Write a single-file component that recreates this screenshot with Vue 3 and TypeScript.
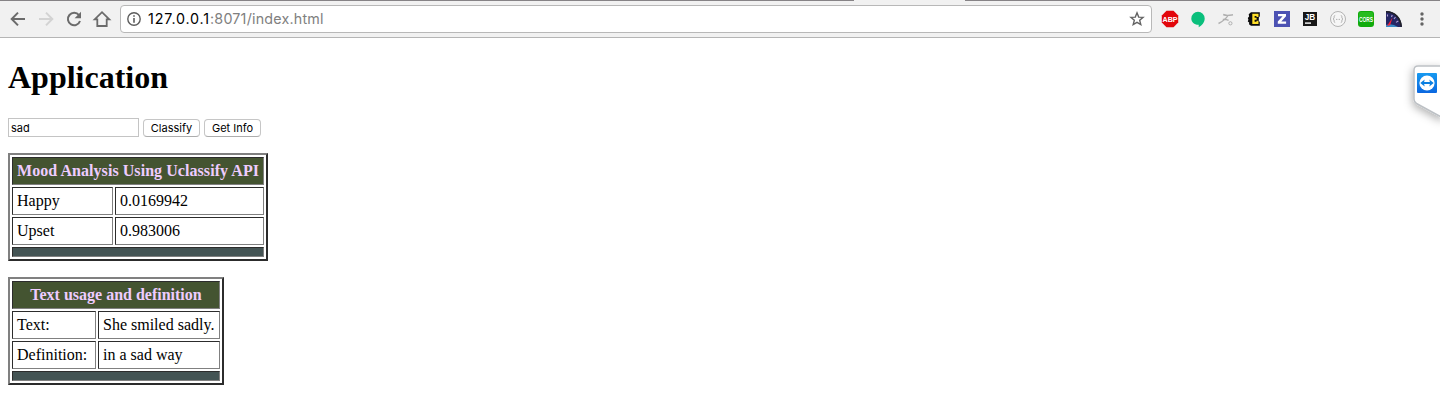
<script setup lang="ts">
interface ResultTable {
  title: string
  kind: string
  rows: [string, string][]
}

const query = 'sad'
const tables: ResultTable[] = [
  { title: 'Mood Analysis Using Uclassify API', kind: 'mood', rows: [['Happy', '0.0169942'], ['Upset', '0.983006']] },
  { title: 'Text usage and definition', kind: 'usage', rows: [['Text:', 'She smiled sadly.'], ['Definition:', 'in a sad way']] },
]
</script>

<template>
  <div class="page">
    <header class="toolbar">
      <div class="tab-gap"></div>
      <nav class="nav">
        <svg width="18" height="18" viewBox="0 0 18 18" fill="none" stroke="#6b6b6b" stroke-width="2"><path d="M16 9H3M9 2.6 2.7 9 9 15.4" /></svg>
        <svg width="18" height="18" viewBox="0 0 18 18" fill="none" stroke="#d3d3d3" stroke-width="2"><path d="M2 9h13M9 2.6 15.3 9 9 15.4" /></svg>
        <svg width="18" height="18" viewBox="0 0 18 18"><path d="M14 5.2A6.2 6.2 0 1 0 15 11" fill="none" stroke="#6b6b6b" stroke-width="2" /><path d="M16 1.8v6.4H9.6z" fill="#6b6b6b" /></svg>
        <svg width="18" height="18" viewBox="0 0 18 18" fill="none" stroke="#6b6b6b" stroke-width="1.8"><path d="M1.7 9.4 9 2.2l7.3 7.2h-2.6V16H4.3V9.4z" /></svg>
      </nav>
      <div class="omnibox">
        <svg class="info" width="14" height="14" viewBox="0 0 14 14"><circle cx="7" cy="7" r="6.2" fill="none" stroke="#5d5d5d" stroke-width="1.4" /><path d="M6.2 3.2h1.6v1.6H6.2zM6.2 6.1h1.6v4.7H6.2z" fill="#5d5d5d" /></svg>
        <div class="url"><span class="host">127.0.0.1</span>:8071/index.html</div>
        <svg class="star" width="16" height="16" viewBox="0 0 16 16"><path d="m8 1.8 1.7 4.3 4.4.3-3.4 2.9 1.1 4.3L8 11.3l-3.8 2.3 1.1-4.3-3.4-2.9 4.4-.3z" fill="none" stroke="#636363" stroke-width="1.4" /></svg>
      </div>
      <div class="extensions">
        <svg width="18" height="18" viewBox="0 0 18 18"><path d="M5.5.8h7l4.7 4.7v7l-4.7 4.7h-7L.8 12.5v-7z" fill="#e2060c" /><text x="9" y="12" text-anchor="middle" class="abp" textLength="15" lengthAdjust="spacingAndGlyphs">ABP</text></svg>
        <svg width="18" height="18" viewBox="0 0 18 18"><path d="M9 1.8a6.7 6.7 0 0 1 6.7 6.7c0 4-2.8 7-6 8.7v-2.4C5.5 15 2.3 12 2.3 8.5A6.7 6.7 0 0 1 9 1.8" fill="#0abf7c" /></svg>
        <svg width="18" height="18" viewBox="0 0 18 18" fill="none" stroke="#b0b0b0"><path d="M6.2 4.5c3 1.5 5 1 9.8.3M11 5.5C9.5 8 6 11.3 1.5 13.5M5.8 9.4c2.5-.2 4.2.2 5.8 1" stroke-width="1.4" /><circle cx="13.4" cy="13.3" r="1.6" /></svg>
        <svg width="18" height="18" viewBox="0 0 18 18"><path d="M6 2.2h8.8v4l-1 1.2V11l1 1v3.7H6L4 14.2l.2-1.8-1.4-1 .6-1.7L2.8 8l1.3-1.5-.4-2.2z" fill="#0b0b0b" /><path d="M7.3 3.8h6.2v3.1h-2v-.8H9.6v1.6h2v2h-2v2h1.9v-1h2v3.3H7.3z" fill="#ffdf28" /></svg>
        <svg width="18" height="18" viewBox="0 0 18 18"><path d="M1 1h16v16H1z" fill="#4c52b3" /><path d="M5 4h8v2.2l-4.7 5.3h4.8v2.3H4.8v-2.2l4.8-5.3H5z" fill="#fff" /></svg>
        <svg width="18" height="18" viewBox="0 0 18 18"><path d="M2 2h14v14H2z" fill="#171717" /><text x="3.8" y="10" class="jb" textLength="10.5" lengthAdjust="spacingAndGlyphs">JB</text><path d="M4 12.4h6v1.4H4z" fill="#fff" /></svg>
        <svg width="18" height="18" viewBox="0 0 18 18"><circle cx="9" cy="9" r="7.5" fill="#f6f6f6" stroke="#b3b3b3" /><path d="M6.2 5.5q-1.1 0-1.1 1.2v1.2L4.2 9l.9 1v1.3q0 1.2 1.1 1.2M11.8 5.5q1.1 0 1.1 1.2v1.2l.9 1.1-.9 1v1.3q0 1.2-1.1 1.2M7 9.4h1m.6 0h.8m.6 0h1" fill="none" stroke="#aaa" stroke-width=".9" /></svg>
        <svg width="18" height="18" viewBox="0 0 18 18"><rect x="1" y="1" width="16" height="16" rx="3" fill="#11ab0c" /><path d="M2 4q0-2 2-2h10q2 0 2 2v4H2z" fill="#27bc20" /><text x="9" y="11.5" text-anchor="middle" class="cors" textLength="14" lengthAdjust="spacingAndGlyphs">CORS</text></svg>
        <svg width="18" height="18" viewBox="0 0 18 18"><path d="M1 1c9 0 15.5 7 16 16H1z" fill="#252664" /><path d="M1 1.8c9 0 14.7 6.5 15.2 15" fill="none" stroke="#222228" stroke-width="1.6" /><path d="M2.5 4.5v2M7.2 5 6.5 7M10.5 7 9 9M13.3 11 11 12.4" stroke="#b4a3d7" stroke-width="1.1" /><path d="M1 15q6-2 12 2H1z" fill="#398ac6" /><path d="m2 16 5.5-8.5L5.2 15z" fill="#fa1f38" /></svg>
        <svg width="18" height="18" viewBox="0 0 18 18" fill="#646464"><circle cx="9" cy="4" r="1.7" /><circle cx="9" cy="9" r="1.7" /><circle cx="9" cy="14" r="1.7" /></svg>
      </div>
    </header>

    <main class="content">
      <h1>Application</h1>
      <form class="controls" @submit.prevent>
        <input type="text" :value="query" />
        <button type="button">Classify</button>
        <button type="button">Get Info</button>
      </form>
      <table v-for="table in tables" :key="table.kind" :class="table.kind">
        <colgroup><col class="label" /><col /></colgroup>
        <thead><tr><th colspan="2">{{ table.title }}</th></tr></thead>
        <tbody>
          <tr v-for="row in table.rows" :key="row[0]"><td>{{ row[0] }}</td><td>{{ row[1] }}</td></tr>
        </tbody>
        <tfoot><tr><td colspan="2"></td></tr></tfoot>
      </table>
    </main>

    <svg class="remote-tab" width="45" height="75" viewBox="0 0 45 75">
      <defs>
        <linearGradient id="badge" x1="0" y1="0" x2="0" y2="1"><stop stop-color="#1699f0" /><stop offset="1" stop-color="#0b67e0" /></linearGradient>
        <filter id="shadow" x="-60%" y="-40%" width="220%" height="200%"><feDropShadow dx="-1" dy="3" stdDeviation="4.5" flood-opacity=".3" /></filter>
      </defs>
      <path d="M48 11H23q-4 0-4 4v29q0 3 2.5 4.5L48 63z" fill="#fff" stroke="#bdc1c5" stroke-width="1.5" filter="url(#shadow)" />
      <rect x="22" y="18" width="20" height="20" rx="1" fill="url(#badge)" />
      <circle cx="32" cy="28" r="7.6" fill="#fff" />
      <path d="m25.3 28 4.4-3.6-.6 2.5h5.8l-.6-2.5 4.4 3.6-4.4 3.6.6-2.5h-5.8l.6 2.5z" fill="#0b7fe1" />
    </svg>
  </div>
</template>

<style>
html, body { margin: 0; background: #fff; overflow: hidden; }
</style>

<style scoped>
.page { position: relative; height: 418px; overflow: hidden; font: 16px/18px "Liberation Serif", serif; color: #000; }
.toolbar { position: relative; box-sizing: border-box; height: 38px; display: flex; align-items: center; padding-left: 9px; background: #f1f1f1; border-top: 1px solid #868386; border-bottom: 1px solid #b5b5b5; }
.tab-gap { position: absolute; left: 854px; top: -1px; width: 111px; height: 1px; background: #f1f1f1; }
.nav { display: flex; gap: 10px; }
svg { display: block; flex: none; overflow: visible; }
.omnibox { box-sizing: border-box; width: 1032px; height: 28px; margin-left: 9px; padding: 0 6px; display: flex; align-items: center; background: #fff; border: 1px solid #b8b8b8; border-radius: 4px; }
.url { margin-left: 7px; flex: 1; font: 14.3px/20px Inter, sans-serif; letter-spacing: 0.2px; color: #808080; }
.host { color: #000; letter-spacing: 0.85px; }
.extensions { display: flex; gap: 10px; margin-left: 9px; }
.abp { font: bold 8px "Liberation Sans", sans-serif; fill: #fff; }
.jb { font: bold 8.5px "Liberation Sans", sans-serif; fill: #fff; }
.cors { font: bold 7.5px "Liberation Sans", sans-serif; fill: #fff; }
.content { padding: 21px 8px 0; }
h1 { margin: 0; font-size: 32px; line-height: 37px; font-weight: bold; }
.controls { display: flex; gap: 4px; height: 19px; margin: 22px 0 16px; align-items: flex-end; }
input, button { box-sizing: border-box; margin: 0; color: #000; font: 11px/13px Inter, sans-serif; }
input { width: 131px; height: 19px; padding: 1px 2px; border: 1px solid #c4c4c4; border-radius: 0; background: #fff; outline: none; }
button { width: 57px; height: 18px; padding: 0; border: 1px solid #c6c6c6; border-bottom-color: #adadad; border-radius: 4px; background: #fff; white-space: nowrap; }
table { table-layout: fixed; border: 2px solid; border-color: #808080 #2c2c2c #2c2c2c #808080; border-spacing: 2px; margin-bottom: 16px; }
.mood { width: 260px; }
.mood .label { width: 101px; }
.mood th { letter-spacing: 0.06px; }
.usage { width: 216px; }
.usage .label { width: 84px; }
th, td { box-sizing: border-box; padding: 4px; height: 28px; border: 1px solid; border-color: #2c2c2c #808080 #808080 #2c2c2c; white-space: nowrap; }
th { background: #445431; color: #eeccff; text-align: center; padding: 4px 0; }
tfoot td { height: 10px; background: #445454; }
.remote-tab { position: absolute; left: 1395px; top: 55px; }
</style>
